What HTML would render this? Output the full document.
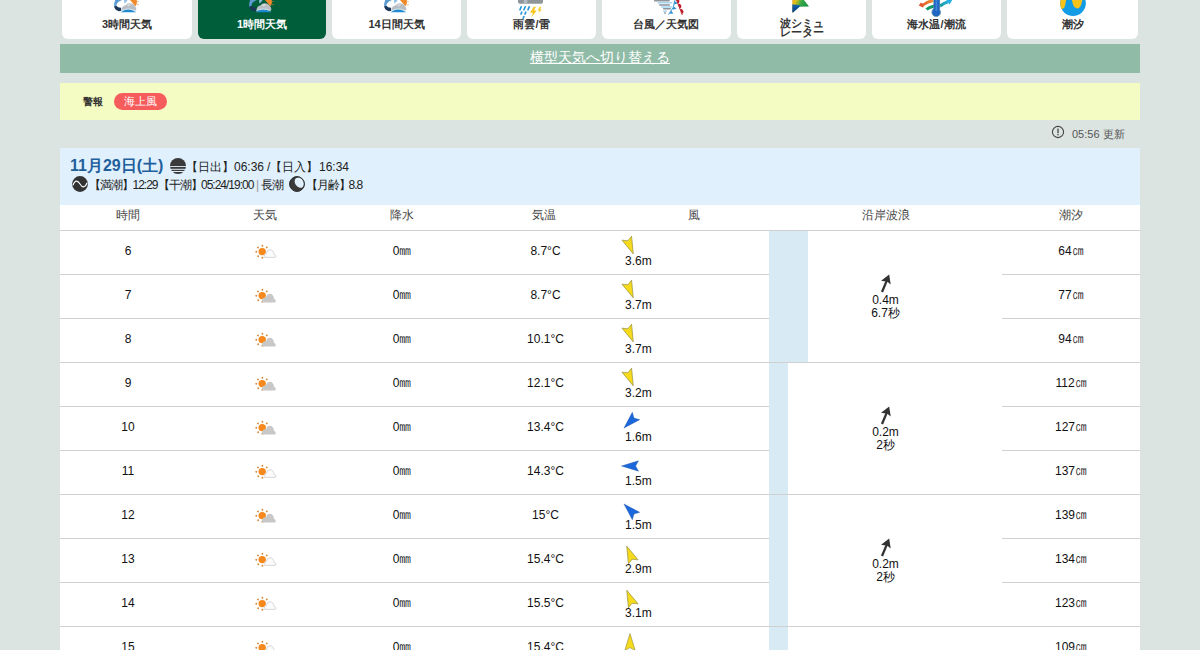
<!DOCTYPE html>
<html><head><meta charset="utf-8">
<style>
*{box-sizing:border-box}
html,body{margin:0;padding:0}
body{width:1200px;height:650px;overflow:hidden;background:#dce4e2;font-family:"Liberation Sans",sans-serif;color:#222;position:relative}
.tab{position:absolute;top:-20px;height:59px;width:129px;background:#fff;border-radius:6px;}
.tab.on{background:#005e3a}
.tab .t{position:absolute;left:0;right:0;top:37px;text-align:center;font-size:11px;font-weight:bold;color:#333;line-height:14px;white-space:nowrap}
.tab.on .t{color:#fff}
.tab svg{position:absolute}
#gbar{position:absolute;left:60px;top:44px;width:1080px;height:29px;background:#8fbba7}
#gbar a{position:absolute;left:0;right:0;top:5px;text-align:center;color:#fff;font-size:14px;text-decoration:underline;line-height:17px}
#ybar{position:absolute;left:60px;top:83px;width:1080px;height:37px;background:#f5fcc3}
#ybar .k{position:absolute;left:23px;top:11.5px;font-size:10px;font-weight:bold;color:#333;line-height:14px}
#ybar .b{position:absolute;left:54px;top:10px;width:53px;height:17px;border-radius:9px;background:#f75c5c;color:#fff;font-size:11px;line-height:17px;text-align:center}
#upd{position:absolute;left:1072px;top:127px;font-size:11px;color:#555;line-height:14px}
#hd{position:absolute;left:60px;top:148px;width:1080px;height:57px;background:#e0f0fc}
#hrow{position:absolute;left:60px;top:205px;width:1080px;height:470px;background:#fff}
.h{position:absolute;top:207px;font-size:12px;color:#444;text-align:center;line-height:16px}
.ln{position:absolute;height:1px;background:#d0d0d0}
.c{position:absolute;height:43px;line-height:43px;text-align:center;font-size:12px;color:#111}
.mm{font-size:12px;display:inline-block;line-height:12px;transform:scaleY(1.3);transform-origin:0 10px}
.ic{position:absolute}
.ic svg{display:block}
.ar{position:absolute;overflow:visible}
.ws{position:absolute;font-size:12px;line-height:14px;color:#111}
.bar{position:absolute;background:#d8ebf5}
.wa{position:absolute}
.dt{position:absolute;font-size:16px;font-weight:bold;color:#1f5f9c;line-height:18px;white-space:nowrap}
.hi{position:absolute}
.l1{position:absolute;font-size:12px;line-height:14px;color:#222;white-space:nowrap}
.l2{position:absolute;font-size:12px;line-height:14px;color:#222;white-space:nowrap;letter-spacing:-1px}
.wt{position:absolute;text-align:center;font-size:12px;line-height:13px;color:#111}
</style></head><body>
<div class="tab" style="left:62px;width:130px"><svg style="left:50px;top:20px" width="30" height="14" viewBox="0 0 30 14">
<path d="M3.2 0 L10 0 Q6.5 1.2 5 3.5 Q4.2 5 4.6 6.5 L2.4 7.5 Q1.6 3.5 3.2 0Z" fill="#5b9bd0"/>
<path d="M2.2 6.2 Q2.6 10.2 7 11.2 L9.5 10.8 Q8.6 9 9.3 7.8 Q6 8 4.6 6 Z" fill="#1c3657"/>
<path d="M12.2 0 L15.6 0 Q14.2 2.2 12.6 3.6 Q12 2 12.2 0Z" fill="#8dbde3"/>
<path d="M9.5 10.5 Q9.6 6 13.5 5.2 Q15.6 2.6 19.5 3.6 Q22.6 4.4 23.8 7.2 Q24.8 9.2 24 10.5 Z" fill="#b8bec3"/>
<path d="M14.5 5.2 Q17 3.4 19.8 4.4 Q18 4.6 17 6.5 Z" fill="#d6dadd"/>
<path d="M8.4 12.2 Q16 6.6 24.4 12.2 Z" fill="#1f8ad2"/>
<path d="M9.2 11 Q16 6.8 23.6 11" fill="none" stroke="#cfeefc" stroke-width="0.8"/>
<path d="M18 0 L24.8 0 Q25.6 3.2 23.8 6.2 Q21.4 4.2 18 0Z" fill="#f0892a"/>
<circle cx="26" cy="1.6" r="0.55" fill="#f0892a"/><circle cx="26" cy="4.6" r="0.55" fill="#f0892a"/>
</svg><div class="t">3時間天気</div></div>
<div class="tab on" style="left:198px;width:128px"><svg style="left:49px;top:20px" width="30" height="14" viewBox="0 0 30 14">
<path d="M3.2 0 L10 0 Q6.5 1.2 5 3.5 Q4.2 5 4.6 6.5 L2.4 7.5 Q1.6 3.5 3.2 0Z" fill="#5b9bd0"/>
<path d="M2.2 6.2 Q2.6 10.2 7 11.2 L9.5 10.8 Q8.6 9 9.3 7.8 Q6 8 4.6 6 Z" fill="#1c3657"/>
<path d="M12.2 0 L15.6 0 Q14.2 2.2 12.6 3.6 Q12 2 12.2 0Z" fill="#8dbde3"/>
<path d="M9.5 10.5 Q9.6 6 13.5 5.2 Q15.6 2.6 19.5 3.6 Q22.6 4.4 23.8 7.2 Q24.8 9.2 24 10.5 Z" fill="#b8bec3"/>
<path d="M14.5 5.2 Q17 3.4 19.8 4.4 Q18 4.6 17 6.5 Z" fill="#d6dadd"/>
<path d="M8.4 12.2 Q16 6.6 24.4 12.2 Z" fill="#1f8ad2"/>
<path d="M9.2 11 Q16 6.8 23.6 11" fill="none" stroke="#cfeefc" stroke-width="0.8"/>
<path d="M18 0 L24.8 0 Q25.6 3.2 23.8 6.2 Q21.4 4.2 18 0Z" fill="#f0892a"/>
<circle cx="26" cy="1.6" r="0.55" fill="#f0892a"/><circle cx="26" cy="4.6" r="0.55" fill="#f0892a"/>
</svg><div class="t">1時間天気</div></div>
<div class="tab" style="left:332px;width:129px"><svg style="left:49.5px;top:20px" width="30" height="14" viewBox="0 0 30 14">
<path d="M3.2 0 L10 0 Q6.5 1.2 5 3.5 Q4.2 5 4.6 6.5 L2.4 7.5 Q1.6 3.5 3.2 0Z" fill="#5b9bd0"/>
<path d="M2.2 6.2 Q2.6 10.2 7 11.2 L9.5 10.8 Q8.6 9 9.3 7.8 Q6 8 4.6 6 Z" fill="#1c3657"/>
<path d="M12.2 0 L15.6 0 Q14.2 2.2 12.6 3.6 Q12 2 12.2 0Z" fill="#8dbde3"/>
<path d="M9.5 10.5 Q9.6 6 13.5 5.2 Q15.6 2.6 19.5 3.6 Q22.6 4.4 23.8 7.2 Q24.8 9.2 24 10.5 Z" fill="#b8bec3"/>
<path d="M14.5 5.2 Q17 3.4 19.8 4.4 Q18 4.6 17 6.5 Z" fill="#d6dadd"/>
<path d="M8.4 12.2 Q16 6.6 24.4 12.2 Z" fill="#1f8ad2"/>
<path d="M9.2 11 Q16 6.8 23.6 11" fill="none" stroke="#cfeefc" stroke-width="0.8"/>
<path d="M18 0 L24.8 0 Q25.6 3.2 23.8 6.2 Q21.4 4.2 18 0Z" fill="#f0892a"/>
<circle cx="26" cy="1.6" r="0.55" fill="#f0892a"/><circle cx="26" cy="4.6" r="0.55" fill="#f0892a"/>
</svg><div class="t">14日間天気</div></div>
<div class="tab" style="left:467px;width:129px"><svg style="left:49px;top:20px" width="30" height="20" viewBox="0 0 30 20">
<rect x="2" y="-4" width="25" height="7.7" rx="1.8" fill="#8e959b"/>
<path d="M8.5 -4 L12 -4 L11 3.7 L7.5 3.7Z" fill="#b4bac0"/>
<g stroke="#2a98d8" stroke-width="1.7" stroke-linecap="round">
<line x1="4" y1="9.8" x2="5.2" y2="6.8"/><line x1="8" y1="9.8" x2="9.2" y2="6.8"/><line x1="12" y1="9.8" x2="13.2" y2="6.8"/>
<line x1="5" y1="14" x2="5.8" y2="12.2"/><line x1="9" y1="14" x2="9.8" y2="12.2"/><line x1="7.2" y1="18.2" x2="7.8" y2="16.6"/>
</g>
<path d="M17.8 6.8 L14 12.8 L17 12.8 L15.2 17.4 L20.8 10.6 L17.9 10.6 L19.9 6.8 Z" fill="#f7c51c"/>
<path d="M23.6 6.8 L21.6 10.6 L23.3 10.6 L22.4 13.4 L25.9 9.2 L24.2 9.2 L25.4 6.8 Z" fill="#f5cf3a"/>
</svg><div class="t">雨雲/雷</div></div>
<div class="tab" style="left:601.5px;width:129.5px"><svg style="left:48px;top:20px" width="36" height="18" viewBox="0 0 36 18">
<g stroke-width="1.5" stroke-linecap="round">
<line x1="4.7" y1="0.7" x2="19" y2="0.7" stroke="#8d969d"/>
<line x1="8.2" y1="2.8" x2="21.8" y2="2.8" stroke="#a9d6f2"/>
<line x1="9.7" y1="5" x2="19.3" y2="5" stroke="#8d969d"/>
<line x1="11.7" y1="7" x2="21.3" y2="7" stroke="#a9d6f2"/>
<line x1="13.7" y1="8.8" x2="20.3" y2="8.8" stroke="#8d969d"/>
<line x1="13.7" y1="11.2" x2="16.3" y2="11.2" stroke="#a9d6f2"/>
<line x1="14.7" y1="13" x2="15.3" y2="13" stroke="#8d969d"/>
</g>
<path d="M25 0 Q24.4 8 18.5 14.6" fill="none" stroke="#2a8fd0" stroke-width="0.9"/>
<path d="M24.6 1.2 L28 3.2 L24.3 4.4Z M23.6 6.4 L26.6 8.6 L22.8 9.8Z M21.2 10.8 L23.4 13.6 L19.6 13.8Z" fill="#2a8fd0"/>
<path d="M26.3 -0.5 L32.3 15" fill="none" stroke="#c01b2a" stroke-width="0.9"/>
<path d="M26.09 -1.04 A2.4 2.4 0 0 1 27.83 3.44Z M28.02 3.96 A2.4 2.4 0 0 1 29.76 8.44Z M30.11 9.36 A2.4 2.4 0 0 1 31.85 13.84Z" fill="#c01b2a"/>
</svg><div class="t">台風／天気図</div></div>
<div class="tab" style="left:737px;width:129px"><svg style="left:54px;top:20px" width="20" height="14" viewBox="0 0 20 14">
<defs><linearGradient id="gw" x1="0" y1="0" x2="1" y2="0.5"><stop offset="0" stop-color="#e4822c"/><stop offset="0.3" stop-color="#e8c21a"/><stop offset="0.62" stop-color="#36a848"/><stop offset="1" stop-color="#1f8f44"/></linearGradient>
<linearGradient id="gb" x1="0" y1="0" x2="0" y2="1"><stop offset="0" stop-color="#2a6a9a"/><stop offset="0.35" stop-color="#0b56a8"/><stop offset="1" stop-color="#0a3a80"/></linearGradient></defs>
<path d="M1.3 -6 L8 -6.4 L18 6.4 L8.5 6.8 L2 12.6 L1.3 12.6 Z" fill="url(#gw)"/>
<path d="M1.3 4.2 Q5 4.6 9.6 5.6 L8.5 6.8 L2 12.6 L1.3 12.6 Z" fill="url(#gb)"/>
</svg><div class="t" style="line-height:9px;top:38.5px">波シミュ<br>レーター</div></div>
<div class="tab" style="left:872px;width:129px"><svg style="left:45px;top:20px" width="38" height="18" viewBox="0 0 38 18">
<defs><linearGradient id="ro" x1="0" y1="1" x2="1" y2="0"><stop offset="0" stop-color="#e0452c"/><stop offset="1" stop-color="#f39a34"/></linearGradient>
<linearGradient id="tb" x1="0" y1="1" x2="1" y2="0"><stop offset="0" stop-color="#129a8a"/><stop offset="1" stop-color="#27b0e6"/></linearGradient></defs>
<path d="M1.8 5.6 L3.6 2.8 L6 3.4 Q10 0.6 15.6 -1.5 L16.6 2 Q11 3.4 7.4 5.6 L5.8 7.6 Z" fill="url(#ro)"/>
<path d="M8.4 8.6 Q11.8 5.8 17 4.6 L17.4 7.8 Q13.4 8.4 10.6 10.6 Z" fill="#15996a"/>
<path d="M22.4 4.6 Q26.6 1.4 30.6 0.2 L31.6 3.2 Q27.6 4 23.8 7.4 Z" fill="url(#tb)"/>
<path d="M28.4 -1.2 L36 -1.4 L32.6 4.6 Z" fill="#25ade4"/>
<rect x="16.8" y="-3" width="6" height="12" fill="#1e66c4" stroke="#5c8aa0" stroke-width="0.6"/>
<circle cx="19.2" cy="12.3" r="4.3" fill="#1e66c4" stroke="#5c8aa0" stroke-width="0.7"/>
<rect x="17.4" y="-3" width="4.8" height="12.5" fill="#1e66c4"/>
<rect x="18.6" y="-3" width="1.6" height="14" fill="#3f86d8"/>
</svg><div class="t">海水温/潮流</div></div>
<div class="tab" style="left:1007px;width:131px"><svg style="left:50px;top:20px" width="32" height="18" viewBox="0 0 32 18">
<defs><clipPath id="tc"><circle cx="16" cy="3.2" r="12.8"/></clipPath></defs>
<circle cx="16" cy="3.2" r="12.8" fill="#139ce6"/>
<g clip-path="url(#tc)" fill="#f7c21a">
<path d="M0 -10 L9.8 -10 Q9.6 2 7.4 7.2 Q5.6 9.6 3.2 9.4 L0 9 Z"/>
<path d="M13 -10 L26.8 -10 Q25.6 2 23.4 6.6 Q21.8 8.8 19.8 8.6 Q17.4 8.2 16.2 5 Q14.2 -2 13 -10Z"/>
</g>
</svg><div class="t">潮汐</div></div>

<div id="gbar"><a>横型天気へ切り替える</a></div>
<div id="ybar"><span class="k">警報</span><span class="b">海上風</span></div>
<svg style="position:absolute;left:1051px;top:125px" width="14" height="14" viewBox="0 0 14 14"><circle cx="7" cy="7" r="5.6" fill="none" stroke="#444" stroke-width="1.1"/><rect x="6.35" y="3.6" width="1.3" height="4.6" fill="#444"/><rect x="6.35" y="9" width="1.3" height="1.3" fill="#444"/></svg><div id="upd">05:56 更新</div>
<div id="hd"></div>
<div id="hdc">
<div class="dt" style="left:70px;top:157px">11月29日(土)</div>
<svg class="hi" style="left:170px;top:158px" width="16" height="16" viewBox="0 0 16 16"><defs><clipPath id="cc"><circle cx="8" cy="8" r="8"/></clipPath></defs><g clip-path="url(#cc)" fill="#3a3a3a"><rect x="0" y="0" width="16" height="8"/><rect x="0" y="8.9" width="16" height="1.9"/><rect x="0" y="11.8" width="16" height="1.2"/><rect x="0" y="14" width="16" height="2"/></g></svg>
<div class="l1" style="left:186px;top:160px">【日出】</div>
<div class="l1" style="left:234px;top:160px">06:36</div>
<div class="l1" style="left:267px;top:160px">/</div>
<div class="l1" style="left:270px;top:160px">【日入】</div>
<div class="l1" style="left:319px;top:160px">16:34</div>
<svg class="hi" style="left:72px;top:176px" width="16" height="16" viewBox="0 0 16 16"><circle cx="8" cy="8" r="7.9" fill="#333"/><path d="M1 9.2 C3 3.5 6 4.5 8 8 S13 12.5 15 6.8" fill="none" stroke="#fff" stroke-width="1.1"/></svg>
<div class="l2" style="left:89px;top:178px">【満潮】</div>
<div class="l2" style="left:132.5px;top:178px">12:29</div>
<div class="l2" style="left:157.5px;top:178px">【干潮】</div>
<div class="l2" style="left:201px;top:178px">05:24/19:00</div>
<div class="l2" style="left:256px;top:178px;color:#999">|</div>
<div class="l2" style="left:261px;top:178px">長潮</div>
<svg class="hi" style="left:289px;top:176px" width="16" height="16" viewBox="0 0 16 16"><circle cx="8" cy="8" r="7.3" fill="#3a3a3a" stroke="#333" stroke-width="1"/><ellipse cx="10.4" cy="6.6" rx="4.3" ry="5.6" transform="rotate(-35 10.4 6.6)" fill="#e0f0fc"/><circle cx="8" cy="8" r="7.3" fill="none" stroke="#333" stroke-width="1"/></svg>
<div class="l2" style="left:306px;top:178px">【月齢】</div>
<div class="l2" style="left:348.5px;top:178px">8.8</div>
</div>
<div id="hrow"></div>
<div class="h" style="left:60px;width:136px">時間</div>
<div class="h" style="left:196px;width:138px">天気</div>
<div class="h" style="left:334px;width:136px">降水</div>
<div class="h" style="left:470px;width:148px">気温</div>
<div class="h" style="left:618px;width:151px">風</div>
<div class="h" style="left:769px;width:233px">沿岸波浪</div>
<div class="h" style="left:1002px;width:138px">潮汐</div>
<div class="ln" style="top:230px;left:60px;width:709px"></div>
<div class="ln" style="top:230px;left:1002px;width:138px"></div>
<div class="c" style="top:230px;left:60px;width:136px">6</div>
<div class="ic" style="top:244px;left:253px"><svg width="26" height="18" viewBox="0 0 26 18"><circle cx="9.2" cy="7.6" r="3.7" fill="#f7891c"/>
<g fill="#d58a3c">
<circle cx="9.4" cy="1.7" r="0.95"/><circle cx="9.4" cy="13.7" r="0.95"/>
<circle cx="3.3" cy="7.8" r="0.95"/><circle cx="15.2" cy="7.6" r="0.95"/>
<circle cx="5" cy="3.4" r="0.95"/><circle cx="13.8" cy="3.4" r="0.95"/>
<circle cx="5.2" cy="12.2" r="0.95"/><circle cx="13.6" cy="12" r="0.95"/>
</g><path d="M11.8 13.4 L22 13.4 Q23.2 13.3 23 12 Q22.6 10.6 21.2 10.6 Q20.4 6 17 5.8 Q13.8 5.9 13.3 9.6 Q11.3 10 11.1 12 Q11.1 13.4 11.8 13.4 Z" fill="#fbfbfb" stroke="#d2d2d2" stroke-width="0.9"/></svg></div>
<div class="c" style="top:230px;left:334px;width:136px">0<span class="mm">㎜</span></div>
<div class="c" style="top:230px;left:471px;width:149px">8.7°C</div>
<svg class="ar" style="top:234.7px;left:618.7px" width="22" height="22" viewBox="-11 -11 22 22"><g transform="rotate(157.5)"><path d="M0 -8.5 L5.2 8.5 L0 5.6 L-5.2 8.5 Z" fill="#f6da1c" stroke="#8f8a3a" stroke-width="0.6" stroke-linejoin="round"/></g></svg>
<div class="ws" style="top:254px;left:625px">3.6m</div>
<div class="c" style="top:230px;left:1002px;width:138px">64<span class="mm">㎝</span></div>
<div class="ln" style="top:274px;left:60px;width:709px"></div>
<div class="ln" style="top:274px;left:1002px;width:138px"></div>
<div class="c" style="top:274px;left:60px;width:136px">7</div>
<div class="ic" style="top:288px;left:253px"><svg width="26" height="18" viewBox="0 0 26 18"><circle cx="9.2" cy="7.6" r="3.7" fill="#f7891c"/>
<g fill="#d58a3c">
<circle cx="9.4" cy="1.7" r="0.95"/><circle cx="9.4" cy="13.7" r="0.95"/>
<circle cx="3.3" cy="7.8" r="0.95"/><circle cx="15.2" cy="7.6" r="0.95"/>
<circle cx="5" cy="3.4" r="0.95"/><circle cx="13.8" cy="3.4" r="0.95"/>
<circle cx="5.2" cy="12.2" r="0.95"/><circle cx="13.6" cy="12" r="0.95"/>
</g><path d="M9.6 14.6 L21.6 14.6 Q23 14.5 22.8 12.8 Q22.5 11.2 21.1 11 Q20.6 6 17 5.8 Q13.9 5.8 13.2 9 Q10.1 8.9 9.1 11.7 Q8.4 14.6 9.6 14.6 Z" fill="#c8c8c8"/></svg></div>
<div class="c" style="top:274px;left:334px;width:136px">0<span class="mm">㎜</span></div>
<div class="c" style="top:274px;left:471px;width:149px">8.7°C</div>
<svg class="ar" style="top:278.7px;left:618.7px" width="22" height="22" viewBox="-11 -11 22 22"><g transform="rotate(157.5)"><path d="M0 -8.5 L5.2 8.5 L0 5.6 L-5.2 8.5 Z" fill="#f6da1c" stroke="#8f8a3a" stroke-width="0.6" stroke-linejoin="round"/></g></svg>
<div class="ws" style="top:298px;left:625px">3.7m</div>
<div class="c" style="top:274px;left:1002px;width:138px">77<span class="mm">㎝</span></div>
<div class="ln" style="top:318px;left:60px;width:709px"></div>
<div class="ln" style="top:318px;left:1002px;width:138px"></div>
<div class="c" style="top:318px;left:60px;width:136px">8</div>
<div class="ic" style="top:332px;left:253px"><svg width="26" height="18" viewBox="0 0 26 18"><circle cx="9.2" cy="7.6" r="3.7" fill="#f7891c"/>
<g fill="#d58a3c">
<circle cx="9.4" cy="1.7" r="0.95"/><circle cx="9.4" cy="13.7" r="0.95"/>
<circle cx="3.3" cy="7.8" r="0.95"/><circle cx="15.2" cy="7.6" r="0.95"/>
<circle cx="5" cy="3.4" r="0.95"/><circle cx="13.8" cy="3.4" r="0.95"/>
<circle cx="5.2" cy="12.2" r="0.95"/><circle cx="13.6" cy="12" r="0.95"/>
</g><path d="M9.6 14.6 L21.6 14.6 Q23 14.5 22.8 12.8 Q22.5 11.2 21.1 11 Q20.6 6 17 5.8 Q13.9 5.8 13.2 9 Q10.1 8.9 9.1 11.7 Q8.4 14.6 9.6 14.6 Z" fill="#c8c8c8"/></svg></div>
<div class="c" style="top:318px;left:334px;width:136px">0<span class="mm">㎜</span></div>
<div class="c" style="top:318px;left:471px;width:149px">10.1°C</div>
<svg class="ar" style="top:322.7px;left:618.7px" width="22" height="22" viewBox="-11 -11 22 22"><g transform="rotate(157.5)"><path d="M0 -8.5 L5.2 8.5 L0 5.6 L-5.2 8.5 Z" fill="#f6da1c" stroke="#8f8a3a" stroke-width="0.6" stroke-linejoin="round"/></g></svg>
<div class="ws" style="top:342px;left:625px">3.7m</div>
<div class="c" style="top:318px;left:1002px;width:138px">94<span class="mm">㎝</span></div>
<div class="ln" style="top:362px;left:60px;width:709px"></div>
<div class="ln" style="top:362px;left:1002px;width:138px"></div>
<div class="c" style="top:362px;left:60px;width:136px">9</div>
<div class="ic" style="top:376px;left:253px"><svg width="26" height="18" viewBox="0 0 26 18"><circle cx="9.2" cy="7.6" r="3.7" fill="#f7891c"/>
<g fill="#d58a3c">
<circle cx="9.4" cy="1.7" r="0.95"/><circle cx="9.4" cy="13.7" r="0.95"/>
<circle cx="3.3" cy="7.8" r="0.95"/><circle cx="15.2" cy="7.6" r="0.95"/>
<circle cx="5" cy="3.4" r="0.95"/><circle cx="13.8" cy="3.4" r="0.95"/>
<circle cx="5.2" cy="12.2" r="0.95"/><circle cx="13.6" cy="12" r="0.95"/>
</g><path d="M9.6 14.6 L21.6 14.6 Q23 14.5 22.8 12.8 Q22.5 11.2 21.1 11 Q20.6 6 17 5.8 Q13.9 5.8 13.2 9 Q10.1 8.9 9.1 11.7 Q8.4 14.6 9.6 14.6 Z" fill="#c8c8c8"/></svg></div>
<div class="c" style="top:362px;left:334px;width:136px">0<span class="mm">㎜</span></div>
<div class="c" style="top:362px;left:471px;width:149px">12.1°C</div>
<svg class="ar" style="top:366.7px;left:618.7px" width="22" height="22" viewBox="-11 -11 22 22"><g transform="rotate(157.5)"><path d="M0 -8.5 L5.2 8.5 L0 5.6 L-5.2 8.5 Z" fill="#f6da1c" stroke="#8f8a3a" stroke-width="0.6" stroke-linejoin="round"/></g></svg>
<div class="ws" style="top:386px;left:625px">3.2m</div>
<div class="c" style="top:362px;left:1002px;width:138px">112<span class="mm">㎝</span></div>
<div class="ln" style="top:406px;left:60px;width:709px"></div>
<div class="ln" style="top:406px;left:1002px;width:138px"></div>
<div class="c" style="top:406px;left:60px;width:136px">10</div>
<div class="ic" style="top:420px;left:253px"><svg width="26" height="18" viewBox="0 0 26 18"><circle cx="9.2" cy="7.6" r="3.7" fill="#f7891c"/>
<g fill="#d58a3c">
<circle cx="9.4" cy="1.7" r="0.95"/><circle cx="9.4" cy="13.7" r="0.95"/>
<circle cx="3.3" cy="7.8" r="0.95"/><circle cx="15.2" cy="7.6" r="0.95"/>
<circle cx="5" cy="3.4" r="0.95"/><circle cx="13.8" cy="3.4" r="0.95"/>
<circle cx="5.2" cy="12.2" r="0.95"/><circle cx="13.6" cy="12" r="0.95"/>
</g><path d="M9.6 14.6 L21.6 14.6 Q23 14.5 22.8 12.8 Q22.5 11.2 21.1 11 Q20.6 6 17 5.8 Q13.9 5.8 13.2 9 Q10.1 8.9 9.1 11.7 Q8.4 14.6 9.6 14.6 Z" fill="#c8c8c8"/></svg></div>
<div class="c" style="top:406px;left:334px;width:136px">0<span class="mm">㎜</span></div>
<div class="c" style="top:406px;left:471px;width:149px">13.4°C</div>
<svg class="ar" style="top:410.7px;left:618.7px" width="22" height="22" viewBox="-11 -11 22 22"><g transform="rotate(225)"><path d="M0 -8.5 L5.2 8.5 L0 5.6 L-5.2 8.5 Z" fill="#1b68dc" stroke="#1d4fa0" stroke-width="0.4" stroke-linejoin="round"/></g></svg>
<div class="ws" style="top:430px;left:625px">1.6m</div>
<div class="c" style="top:406px;left:1002px;width:138px">127<span class="mm">㎝</span></div>
<div class="ln" style="top:450px;left:60px;width:709px"></div>
<div class="ln" style="top:450px;left:1002px;width:138px"></div>
<div class="c" style="top:450px;left:60px;width:136px">11</div>
<div class="ic" style="top:464px;left:253px"><svg width="26" height="18" viewBox="0 0 26 18"><circle cx="9.2" cy="7.6" r="3.7" fill="#f7891c"/>
<g fill="#d58a3c">
<circle cx="9.4" cy="1.7" r="0.95"/><circle cx="9.4" cy="13.7" r="0.95"/>
<circle cx="3.3" cy="7.8" r="0.95"/><circle cx="15.2" cy="7.6" r="0.95"/>
<circle cx="5" cy="3.4" r="0.95"/><circle cx="13.8" cy="3.4" r="0.95"/>
<circle cx="5.2" cy="12.2" r="0.95"/><circle cx="13.6" cy="12" r="0.95"/>
</g><path d="M11.8 13.4 L22 13.4 Q23.2 13.3 23 12 Q22.6 10.6 21.2 10.6 Q20.4 6 17 5.8 Q13.8 5.9 13.3 9.6 Q11.3 10 11.1 12 Q11.1 13.4 11.8 13.4 Z" fill="#fbfbfb" stroke="#d2d2d2" stroke-width="0.9"/></svg></div>
<div class="c" style="top:450px;left:334px;width:136px">0<span class="mm">㎜</span></div>
<div class="c" style="top:450px;left:471px;width:149px">14.3°C</div>
<svg class="ar" style="top:454.7px;left:618.7px" width="22" height="22" viewBox="-11 -11 22 22"><g transform="rotate(270)"><path d="M0 -8.5 L5.2 8.5 L0 5.6 L-5.2 8.5 Z" fill="#1b68dc" stroke="#1d4fa0" stroke-width="0.4" stroke-linejoin="round"/></g></svg>
<div class="ws" style="top:474px;left:625px">1.5m</div>
<div class="c" style="top:450px;left:1002px;width:138px">137<span class="mm">㎝</span></div>
<div class="ln" style="top:494px;left:60px;width:709px"></div>
<div class="ln" style="top:494px;left:1002px;width:138px"></div>
<div class="c" style="top:494px;left:60px;width:136px">12</div>
<div class="ic" style="top:508px;left:253px"><svg width="26" height="18" viewBox="0 0 26 18"><circle cx="9.2" cy="7.6" r="3.7" fill="#f7891c"/>
<g fill="#d58a3c">
<circle cx="9.4" cy="1.7" r="0.95"/><circle cx="9.4" cy="13.7" r="0.95"/>
<circle cx="3.3" cy="7.8" r="0.95"/><circle cx="15.2" cy="7.6" r="0.95"/>
<circle cx="5" cy="3.4" r="0.95"/><circle cx="13.8" cy="3.4" r="0.95"/>
<circle cx="5.2" cy="12.2" r="0.95"/><circle cx="13.6" cy="12" r="0.95"/>
</g><path d="M9.6 14.6 L21.6 14.6 Q23 14.5 22.8 12.8 Q22.5 11.2 21.1 11 Q20.6 6 17 5.8 Q13.9 5.8 13.2 9 Q10.1 8.9 9.1 11.7 Q8.4 14.6 9.6 14.6 Z" fill="#c8c8c8"/></svg></div>
<div class="c" style="top:494px;left:334px;width:136px">0<span class="mm">㎜</span></div>
<div class="c" style="top:494px;left:471px;width:149px">15°C</div>
<svg class="ar" style="top:498.7px;left:618.7px" width="22" height="22" viewBox="-11 -11 22 22"><g transform="rotate(315)"><path d="M0 -8.5 L5.2 8.5 L0 5.6 L-5.2 8.5 Z" fill="#1b68dc" stroke="#1d4fa0" stroke-width="0.4" stroke-linejoin="round"/></g></svg>
<div class="ws" style="top:518px;left:625px">1.5m</div>
<div class="c" style="top:494px;left:1002px;width:138px">139<span class="mm">㎝</span></div>
<div class="ln" style="top:538px;left:60px;width:709px"></div>
<div class="ln" style="top:538px;left:1002px;width:138px"></div>
<div class="c" style="top:538px;left:60px;width:136px">13</div>
<div class="ic" style="top:552px;left:253px"><svg width="26" height="18" viewBox="0 0 26 18"><circle cx="9.2" cy="7.6" r="3.7" fill="#f7891c"/>
<g fill="#d58a3c">
<circle cx="9.4" cy="1.7" r="0.95"/><circle cx="9.4" cy="13.7" r="0.95"/>
<circle cx="3.3" cy="7.8" r="0.95"/><circle cx="15.2" cy="7.6" r="0.95"/>
<circle cx="5" cy="3.4" r="0.95"/><circle cx="13.8" cy="3.4" r="0.95"/>
<circle cx="5.2" cy="12.2" r="0.95"/><circle cx="13.6" cy="12" r="0.95"/>
</g><path d="M11.8 13.4 L22 13.4 Q23.2 13.3 23 12 Q22.6 10.6 21.2 10.6 Q20.4 6 17 5.8 Q13.8 5.9 13.3 9.6 Q11.3 10 11.1 12 Q11.1 13.4 11.8 13.4 Z" fill="#fbfbfb" stroke="#d2d2d2" stroke-width="0.9"/></svg></div>
<div class="c" style="top:538px;left:334px;width:136px">0<span class="mm">㎜</span></div>
<div class="c" style="top:538px;left:471px;width:149px">15.4°C</div>
<svg class="ar" style="top:542.7px;left:618.7px" width="22" height="22" viewBox="-11 -11 22 22"><g transform="rotate(337.5)"><path d="M0 -8.5 L5.2 8.5 L0 5.6 L-5.2 8.5 Z" fill="#f6da1c" stroke="#8f8a3a" stroke-width="0.6" stroke-linejoin="round"/></g></svg>
<div class="ws" style="top:562px;left:625px">2.9m</div>
<div class="c" style="top:538px;left:1002px;width:138px">134<span class="mm">㎝</span></div>
<div class="ln" style="top:582px;left:60px;width:709px"></div>
<div class="ln" style="top:582px;left:1002px;width:138px"></div>
<div class="c" style="top:582px;left:60px;width:136px">14</div>
<div class="ic" style="top:596px;left:253px"><svg width="26" height="18" viewBox="0 0 26 18"><circle cx="9.2" cy="7.6" r="3.7" fill="#f7891c"/>
<g fill="#d58a3c">
<circle cx="9.4" cy="1.7" r="0.95"/><circle cx="9.4" cy="13.7" r="0.95"/>
<circle cx="3.3" cy="7.8" r="0.95"/><circle cx="15.2" cy="7.6" r="0.95"/>
<circle cx="5" cy="3.4" r="0.95"/><circle cx="13.8" cy="3.4" r="0.95"/>
<circle cx="5.2" cy="12.2" r="0.95"/><circle cx="13.6" cy="12" r="0.95"/>
</g><path d="M11.8 13.4 L22 13.4 Q23.2 13.3 23 12 Q22.6 10.6 21.2 10.6 Q20.4 6 17 5.8 Q13.8 5.9 13.3 9.6 Q11.3 10 11.1 12 Q11.1 13.4 11.8 13.4 Z" fill="#fbfbfb" stroke="#d2d2d2" stroke-width="0.9"/></svg></div>
<div class="c" style="top:582px;left:334px;width:136px">0<span class="mm">㎜</span></div>
<div class="c" style="top:582px;left:471px;width:149px">15.5°C</div>
<svg class="ar" style="top:586.7px;left:618.7px" width="22" height="22" viewBox="-11 -11 22 22"><g transform="rotate(337.5)"><path d="M0 -8.5 L5.2 8.5 L0 5.6 L-5.2 8.5 Z" fill="#f6da1c" stroke="#8f8a3a" stroke-width="0.6" stroke-linejoin="round"/></g></svg>
<div class="ws" style="top:606px;left:625px">3.1m</div>
<div class="c" style="top:582px;left:1002px;width:138px">123<span class="mm">㎝</span></div>
<div class="ln" style="top:626px;left:60px;width:709px"></div>
<div class="ln" style="top:626px;left:1002px;width:138px"></div>
<div class="c" style="top:626px;left:60px;width:136px">15</div>
<div class="ic" style="top:640px;left:253px"><svg width="26" height="18" viewBox="0 0 26 18"><circle cx="9.2" cy="7.6" r="3.7" fill="#f7891c"/>
<g fill="#d58a3c">
<circle cx="9.4" cy="1.7" r="0.95"/><circle cx="9.4" cy="13.7" r="0.95"/>
<circle cx="3.3" cy="7.8" r="0.95"/><circle cx="15.2" cy="7.6" r="0.95"/>
<circle cx="5" cy="3.4" r="0.95"/><circle cx="13.8" cy="3.4" r="0.95"/>
<circle cx="5.2" cy="12.2" r="0.95"/><circle cx="13.6" cy="12" r="0.95"/>
</g><path d="M11.8 13.4 L22 13.4 Q23.2 13.3 23 12 Q22.6 10.6 21.2 10.6 Q20.4 6 17 5.8 Q13.8 5.9 13.3 9.6 Q11.3 10 11.1 12 Q11.1 13.4 11.8 13.4 Z" fill="#fbfbfb" stroke="#d2d2d2" stroke-width="0.9"/></svg></div>
<div class="c" style="top:626px;left:334px;width:136px">0<span class="mm">㎜</span></div>
<div class="c" style="top:626px;left:471px;width:149px">15.4°C</div>
<svg class="ar" style="top:630.7px;left:618.7px" width="22" height="22" viewBox="-11 -11 22 22"><g transform="rotate(0)"><path d="M0 -8.5 L5.2 8.5 L0 5.6 L-5.2 8.5 Z" fill="#f6da1c" stroke="#8f8a3a" stroke-width="0.6" stroke-linejoin="round"/></g></svg>
<div class="c" style="top:626px;left:1002px;width:138px">109<span class="mm">㎝</span></div>
<div class="ln" style="top:230px;left:769px;width:233px"></div>
<div class="bar" style="top:231px;left:769px;width:39px;height:131px"></div>
<svg class="wa" style="top:271px;left:877px" width="18" height="24" viewBox="0 0 18 24"><line x1="5" y1="21" x2="10.2" y2="8.6" stroke="#333" stroke-width="2.3"/><path d="M12.2 3.6 L13.7 13.6 L10.4 10.8 L4.1 9.8 Z" fill="#333"/></svg>
<div class="wt" style="top:294px;left:769px;width:233px">0.4m<br>6.7秒</div>
<div class="ln" style="top:362px;left:769px;width:233px"></div>
<div class="bar" style="top:363px;left:769px;width:19px;height:131px"></div>
<svg class="wa" style="top:403px;left:877px" width="18" height="24" viewBox="0 0 18 24"><line x1="5" y1="21" x2="10.2" y2="8.6" stroke="#333" stroke-width="2.3"/><path d="M12.2 3.6 L13.7 13.6 L10.4 10.8 L4.1 9.8 Z" fill="#333"/></svg>
<div class="wt" style="top:426px;left:769px;width:233px">0.2m<br>2秒</div>
<div class="ln" style="top:494px;left:769px;width:233px"></div>
<div class="bar" style="top:495px;left:769px;width:19px;height:131px"></div>
<svg class="wa" style="top:535px;left:877px" width="18" height="24" viewBox="0 0 18 24"><line x1="5" y1="21" x2="10.2" y2="8.6" stroke="#333" stroke-width="2.3"/><path d="M12.2 3.6 L13.7 13.6 L10.4 10.8 L4.1 9.8 Z" fill="#333"/></svg>
<div class="wt" style="top:558px;left:769px;width:233px">0.2m<br>2秒</div>
<div class="ln" style="top:626px;left:769px;width:233px"></div>
<div class="bar" style="top:627px;left:769px;width:19px;height:30px"></div>
</body></html>
